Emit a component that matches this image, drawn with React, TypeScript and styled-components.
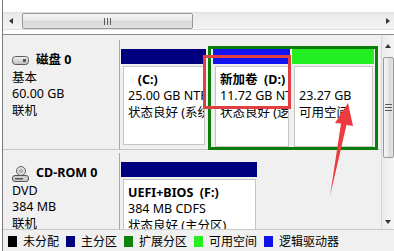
import styled, { createGlobalStyle } from "styled-components";

const GlobalStyle = createGlobalStyle`
  html, body {
    margin: 0;
    padding: 0;
    background: #fff;
  }
  * {
    box-sizing: border-box;
  }
  body {
    font-family: "Noto Sans", "Noto Sans CJK SC", sans-serif;
    font-size: 12.5px;
    color: #000;
  }
`;

const Frame = styled.div`
  position: relative;
  width: 394px;
  height: 251px;
  overflow: hidden;
  background: #fff;
  padding-left: 2px;
`;

const Inner = styled.div`
  height: 100%;
  border-left: 1px solid #7b7b7b;
  display: flex;
  flex-direction: column;
`;

const TopBlank = styled.div`
  height: 12px;
  flex-shrink: 0;
`;

const HScroll = styled.div`
  height: 18px;
  flex-shrink: 0;
  display: flex;
  align-items: center;
  background: linear-gradient(#e9e9e9, #f4f4f4);
  border-top: 1px solid #e0e0e0;
  border-bottom: 1px solid #e0e0e0;
`;

const ArrowBtn = styled.div<{ $w: number; $h?: number }>`
  width: ${({ $w }) => $w}px;
  height: ${({ $h }) => ($h ? `${$h}px` : "100%")};
  flex-shrink: 0;
  display: flex;
  align-items: center;
  justify-content: center;
`;

const Tri = styled.span<{ $dir: "left" | "right" | "up" | "down" }>`
  width: 0;
  height: 0;
  border-style: solid;
  border-color: transparent;
  ${({ $dir }) =>
    $dir === "left"
      ? "border-width: 3px 4px 3px 0; border-right-color: #333;"
      : $dir === "right"
        ? "border-width: 3px 0 3px 4px; border-left-color: #333;"
        : $dir === "up"
          ? "border-width: 0 3px 4px 3px; border-bottom-color: #333;"
          : "border-width: 4px 3px 0 3px; border-top-color: #333;"}
`;

const HThumb = styled.div`
  margin-left: 3px;
  width: 171px;
  height: 16px;
  border: 1px solid #989898;
  border-radius: 2px;
  background: linear-gradient(#f6f6f6, #e6e6e6 50%, #d8d8d8 51%, #e3e3e3);
  display: flex;
  align-items: center;
  justify-content: center;
`;

const HGrip = styled.span`
  width: 7px;
  height: 7px;
  background: repeating-linear-gradient(to right, #5a5a5a 0 1px, transparent 1px 3px);
`;

const VGrip = styled.span`
  width: 7px;
  height: 7px;
  background: repeating-linear-gradient(to bottom, #5a5a5a 0 1px, transparent 1px 3px);
`;

const Track = styled.div`
  flex: 1;
`;

const Spacer = styled.div`
  height: 4px;
  flex-shrink: 0;
`;

const Main = styled.div`
  flex: 1;
  min-height: 0;
  display: flex;
  border-top: 1px solid #8d8d8d;
  background: #f0f0f0;
`;

const DiskList = styled.div`
  flex: 1;
  min-width: 0;
  overflow: hidden;
  padding-top: 5px;
`;

const DiskRow = styled.div`
  display: flex;
  height: 110px;
  margin-bottom: 3px;
  border-bottom: 1px solid #c6c6c6;
`;

const DiskLabel = styled.div`
  width: 117px;
  flex-shrink: 0;
  border-right: 1px solid #a8a8a8;
  padding: 11.5px 0 0 9px;
  line-height: 16.6px;
`;

const LabelTitle = styled.div`
  display: flex;
  align-items: center;
  gap: 7px;
  height: 18px;
  font-weight: 700;
`;

const Partitions = styled.div`
  flex: 1;
  min-width: 0;
  display: flex;
  align-items: flex-start;
`;

const Cell = styled.div<{ $w: number; $h: number; $top?: number }>`
  width: ${({ $w }) => $w}px;
  height: ${({ $h }) => $h}px;
  margin-top: ${({ $top }) => $top ?? 0}px;
  flex-shrink: 0;
  display: flex;
  flex-direction: column;
  padding: 0 1px;
`;

const CellHeader = styled.div<{ $color: string }>`
  height: 15px;
  flex-shrink: 0;
  background: ${({ $color }) => $color};
`;

const CellBody = styled.div`
  flex: 1;
  margin: 2px 1px 0 2px;
  background: #fff;
  border: 1px solid #c4c4c4;
  padding: 4.5px 2px 0 4px;
  overflow: hidden;
  white-space: nowrap;
  line-height: 16.6px;
`;

const Name = styled.div`
  font-weight: 700;
  height: 16.6px;
`;

const Extended = styled.div`
  width: 170px;
  height: 104px;
  margin: 6px 0 0 1px;
  flex-shrink: 0;
  border: 3px solid #0b7d0b;
  border-top-width: 3px;
  padding: 0 0 0 1px;
  display: flex;
`;

const VScroll = styled.div`
  width: 13px;
  flex-shrink: 0;
  border-left: 1px solid #d6d6d6;
  background: linear-gradient(to right, #ebebeb, #f5f5f5);
  display: flex;
  flex-direction: column;
`;

const VThumb = styled.div`
  height: 101px;
  margin-left: 1px;
  border: 1px solid #989898;
  border-radius: 2px;
  background: linear-gradient(to right, #f6f6f6, #e6e6e6 50%, #d8d8d8 51%, #e3e3e3);
  display: flex;
  align-items: center;
  justify-content: center;
`;

const Legend = styled.div`
  height: 22px;
  flex-shrink: 0;
  border-top: 1px solid #c8c8c8;
  background: #f0f0f0;
  display: flex;
  align-items: center;
  padding: 1px 0 0 5px;
  font-size: 12px;
  white-space: nowrap;
`;

const LegendItem = styled.div`
  display: flex;
  align-items: center;
  gap: 6px;
  margin-right: 7px;
`;

const Swatch = styled.span<{ $color: string }>`
  width: 9px;
  height: 11px;
  background: ${({ $color }) => $color};
`;

const RedBox = styled.div`
  position: absolute;
  left: 203px;
  top: 55px;
  width: 88px;
  height: 54px;
  border: 3px solid #e23f42;
  pointer-events: none;
`;

const Overlay = styled.svg`
  position: absolute;
  left: 0;
  top: 0;
  pointer-events: none;
`;

const DiskIcon = () => (
  <svg width="17" height="9" viewBox="0 0 17 9">
    <defs>
      <linearGradient id="hdd" x1="0" y1="0" x2="0" y2="1">
        <stop offset="0" stopColor="#f4f4f4" />
        <stop offset="1" stopColor="#b9b9b9" />
      </linearGradient>
    </defs>
    <rect x="0.5" y="0.5" width="16" height="8" rx="3" fill="url(#hdd)" stroke="#5c5c5c" />
    <rect x="11" y="3" width="3" height="3" fill="#555" />
  </svg>
);

const CdIcon = () => (
  <svg width="17" height="16" viewBox="0 0 17 16">
    <circle cx="9" cy="5" r="4.5" fill="#dcdcdc" stroke="#666" />
    <circle cx="9" cy="5" r="1.3" fill="#fff" stroke="#777" strokeWidth="0.8" />
    <rect x="0.5" y="9.5" width="16" height="6" rx="2.5" fill="#cfcfcf" stroke="#555" />
    <rect x="3" y="12" width="8" height="1.5" fill="#555" />
  </svg>
);

const legend = [
  { color: "#000000", label: "未分配" },
  { color: "#00007f", label: "主分区" },
  { color: "#0d830d", label: "扩展分区" },
  { color: "#22ee22", label: "可用空间" },
  { color: "#1010ee", label: "逻辑驱动器" },
];

export default function App() {
  return (
    <>
      <GlobalStyle />
      <Frame>
        <Inner>
          <TopBlank />
          <HScroll>
            <ArrowBtn $w={16}>
              <Tri $dir="left" />
            </ArrowBtn>
            <HThumb>
              <HGrip />
            </HThumb>
            <Track />
            <ArrowBtn $w={13}>
              <Tri $dir="right" />
            </ArrowBtn>
          </HScroll>
          <Spacer />
          <Main>
            <DiskList>
              <DiskRow>
                <DiskLabel>
                  <LabelTitle>
                    <DiskIcon />
                    磁盘 0
                  </LabelTitle>
                  <div>基本</div>
                  <div>60.00 GB</div>
                  <div>联机</div>
                </DiskLabel>
                <Partitions>
                  <Cell $w={87} $h={96} $top={9}>
                    <CellHeader $color="#00007f" />
                    <CellBody>
                      <Name>{"\u00a0\u00a0\u00a0(C:)"}</Name>
                      <div>25.00 GB NTFS</div>
                      <div>状态良好 (系统, 启动, 页面文件, 活动, 故障转储, 主分区)</div>
                    </CellBody>
                  </Cell>
                  <Extended>
                    <Cell $w={79} $h={98}>
                      <CellHeader $color="#1212f0" />
                      <CellBody>
                        <Name>{"新加卷\u00a0\u00a0(D:)"}</Name>
                        <div>11.72 GB NTFS</div>
                        <div>状态良好 (逻辑驱动器)</div>
                      </CellBody>
                    </Cell>
                    <Cell $w={84} $h={98}>
                      <CellHeader $color="#22ee22" />
                      <CellBody>
                        <Name />
                        <div>23.27 GB</div>
                        <div>可用空间</div>
                      </CellBody>
                    </Cell>
                  </Extended>
                </Partitions>
              </DiskRow>
              <DiskRow>
                <DiskLabel>
                  <LabelTitle>
                    <CdIcon />
                    CD-ROM 0
                  </LabelTitle>
                  <div>DVD</div>
                  <div>384 MB</div>
                  <div>联机</div>
                </DiskLabel>
                <Partitions>
                  <Cell $w={138} $h={96} $top={9}>
                    <CellHeader $color="#00007f" />
                    <CellBody>
                      <Name>{"UEFI+BIOS\u00a0\u00a0(F:)"}</Name>
                      <div>384 MB CDFS</div>
                      <div>状态良好 (主分区)</div>
                    </CellBody>
                  </Cell>
                </Partitions>
              </DiskRow>
            </DiskList>
            <VScroll>
              <ArrowBtn $w={12} $h={22}>
                <Tri $dir="up" />
              </ArrowBtn>
              <VThumb>
                <VGrip />
              </VThumb>
              <Track />
              <ArrowBtn $w={12} $h={14}>
                <Tri $dir="down" />
              </ArrowBtn>
            </VScroll>
          </Main>
          <Legend>
            {legend.map((item) => (
              <LegendItem key={item.label}>
                <Swatch $color={item.color} />
                <span>{item.label}</span>
              </LegendItem>
            ))}
          </Legend>
        </Inner>
        <RedBox />
        <Overlay width="394" height="251" viewBox="0 0 394 251">
          <polygon
            points="348,103 353,126 346.5,125 330,196 341,123.5 335,123"
            fill="#ec3b3f"
          />
        </Overlay>
      </Frame>
    </>
  );
}
